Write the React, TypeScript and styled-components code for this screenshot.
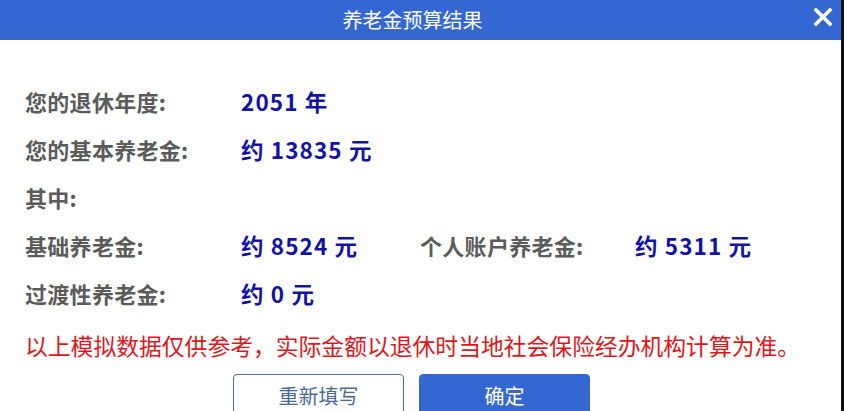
import { Fragment } from 'react';
import styled, { createGlobalStyle } from 'styled-components';

const GlobalStyle = createGlobalStyle`
  html, body {
    margin: 0;
    padding: 0;
    background: #ffffff;
    overflow: hidden;
  }
  * {
    box-sizing: border-box;
  }
`;

const StyledDialog = styled.div`
  width: 844px;
  height: 411px;
  background: #ffffff;
  border-right: 3px solid #111111;
  font-family: 'Noto Sans CJK SC', 'Noto Sans', sans-serif;
  overflow: hidden;
`;

const StyledHeader = styled.div`
  display: grid;
  grid-template-columns: 44px 1fr 60px;
  align-items: center;
  height: 40px;
  background-color: #3567d3;
  color: #ffffff;
`;

const StyledTitle = styled.h1`
  grid-column: 2;
  margin: 0;
  text-align: center;
  font-size: 20px;
  font-weight: 400;
  line-height: 40px;
`;

const StyledClose = styled.button`
  justify-self: end;
  margin-right: 8px;
  margin-bottom: 6px;
  padding: 0;
  border: none;
  background: transparent;
  display: flex;
  cursor: pointer;
`;

const StyledBody = styled.div`
  display: flex;
  flex-direction: column;
  padding: 37px 25px 0 25px;
`;

const StyledRow = styled.div`
  display: grid;
  grid-template-columns: 216px 179px 215px 1fr;
  align-items: center;
  height: 48px;
`;

const StyledLabel = styled.span`
  color: #5b5b5b;
  font-size: 22px;
  font-weight: 700;
  white-space: nowrap;
  letter-spacing: 0.3px;
`;

const StyledValue = styled.span`
  color: #1212a6;
  font-size: 22.5px;
  font-weight: 700;
  white-space: nowrap;
  letter-spacing: 1.1px;
`;

const StyledNote = styled.p`
  margin: 5px 0 0 0;
  height: 48px;
  line-height: 48px;
  color: #e0161c;
  font-size: 22.8px;
  font-weight: 400;
  white-space: nowrap;
`;

const StyledButtonContainer = styled.div`
  display: flex;
  flex-direction: row;
  gap: 15px;
  margin-top: 4px;
  padding-left: 208px;
`;

const StyledButton = styled.button<{ $primary?: boolean }>`
  width: 171px;
  height: 46px;
  padding: 0 0 4px 0;
  border-radius: 4px;
  border: 1px solid ${(props) => (props.$primary ? '#3567d3' : '#4d6f9c')};
  background-color: ${(props) => (props.$primary ? '#3567d3' : '#ffffff')};
  color: ${(props) => (props.$primary ? '#ffffff' : '#4a6893')};
  font-family: 'Noto Sans CJK SC', 'Noto Sans', sans-serif;
  font-size: 20px;
  cursor: pointer;
`;

type Item = { label: string; value?: string };

const rows: Item[][] = [
  [{ label: '您的退休年度:', value: '2051 年' }],
  [{ label: '您的基本养老金:', value: '约 13835 元' }],
  [{ label: '其中:' }],
  [
    { label: '基础养老金:', value: '约 8524 元' },
    { label: '个人账户养老金:', value: '约 5311 元' },
  ],
  [{ label: '过渡性养老金:', value: '约 0 元' }],
];

function CloseIcon() {
  return (
    <svg width="20" height="20" viewBox="0 0 20 20">
      <path d="M3 3 L17 17 M17 3 L3 17" stroke="#ffffff" strokeWidth="3.6" strokeLinecap="square" />
    </svg>
  );
}

export default function App() {
  return (
    <>
      <GlobalStyle />
      <StyledDialog>
        <StyledHeader>
          <StyledTitle>养老金预算结果</StyledTitle>
          <StyledClose aria-label="关闭">
            <CloseIcon />
          </StyledClose>
        </StyledHeader>
        <StyledBody>
          {rows.map((row, i) => (
            <StyledRow key={i}>
              {row.map((item) => (
                <Fragment key={item.label}>
                  <StyledLabel>{item.label}</StyledLabel>
                  <StyledValue>{item.value ?? ''}</StyledValue>
                </Fragment>
              ))}
            </StyledRow>
          ))}
          <StyledNote>以上模拟数据仅供参考，实际金额以退休时当地社会保险经办机构计算为准。</StyledNote>
          <StyledButtonContainer>
            <StyledButton>重新填写</StyledButton>
            <StyledButton $primary>确定</StyledButton>
          </StyledButtonContainer>
        </StyledBody>
      </StyledDialog>
    </>
  );
}
